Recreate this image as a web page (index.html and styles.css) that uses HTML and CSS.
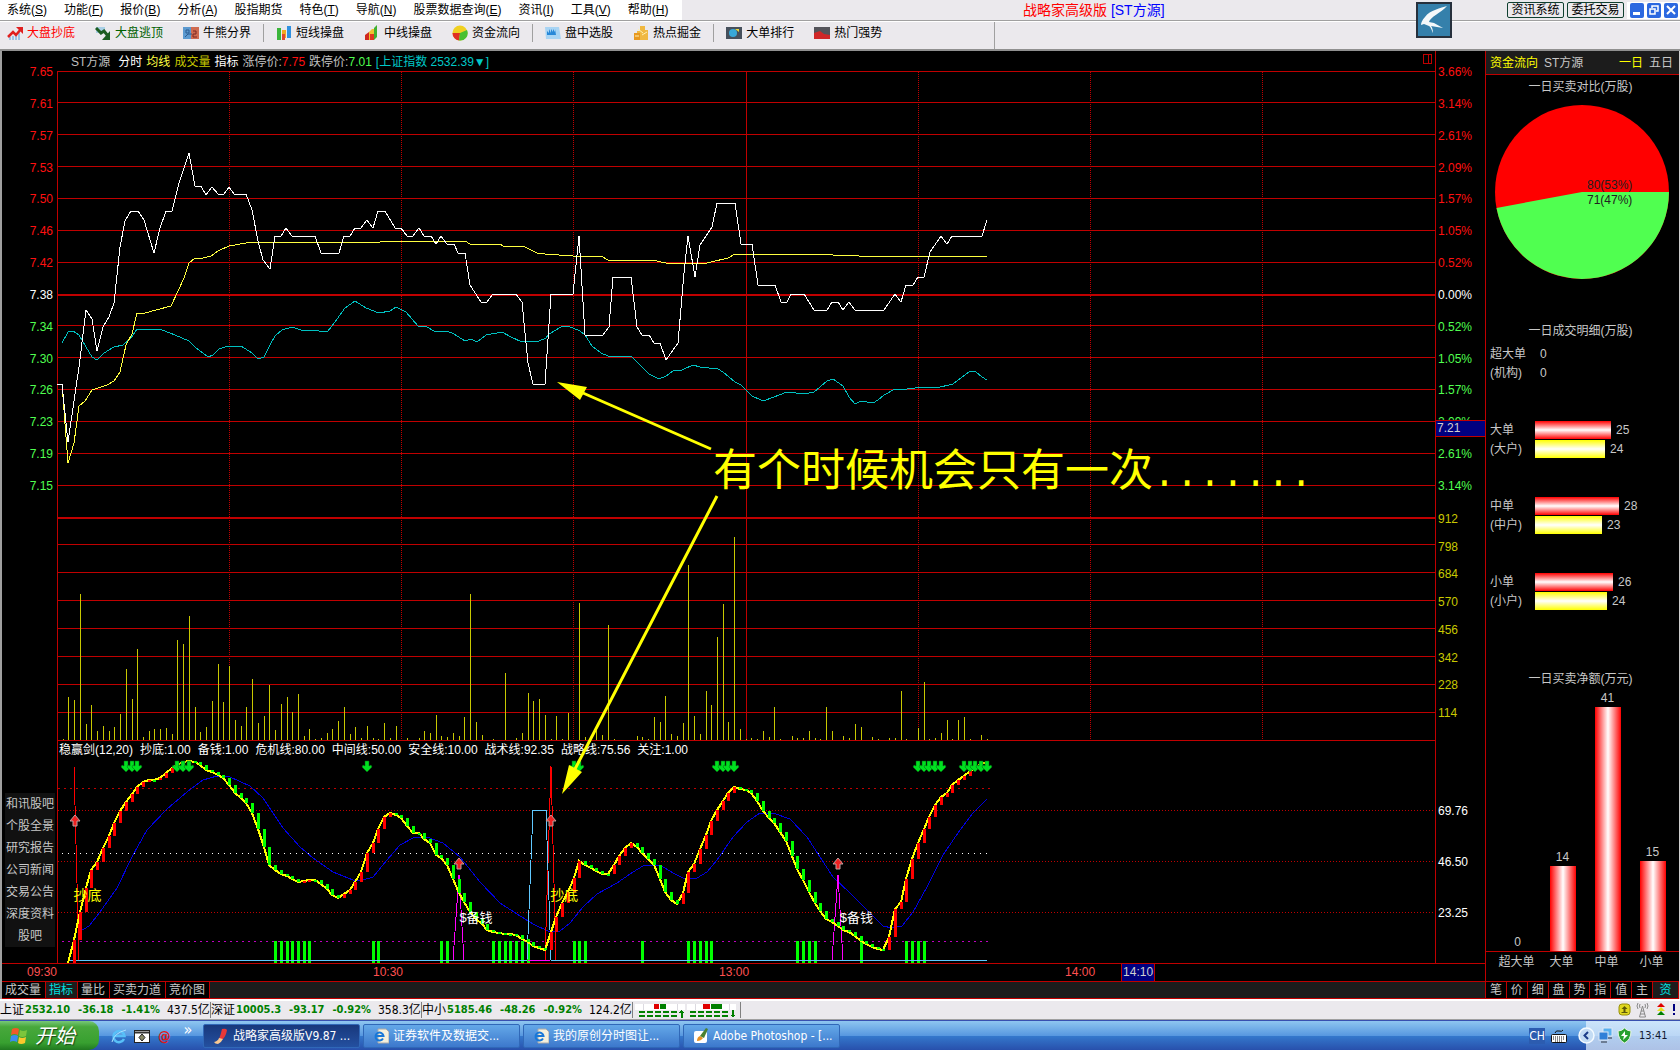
FILE: index.html
```html
<!DOCTYPE html>
<html lang="zh-CN">
<head>
    <meta charset="UTF-8">
    <meta name="viewport" content="width=device-width, initial-scale=1.0">
    <title>战略家高级版[ST方源]</title>
    <link rel="stylesheet" href="styles.css">
    <script src="chart.js" defer></script>
</head>
<body>
    <header class="menubar">
        <nav class="menu">
            <a href="#">系统(<u>S</u>)</a>
            <a href="#">功能(<u>F</u>)</a>
            <a href="#">报价(<u>B</u>)</a>
            <a href="#">分析(<u>A</u>)</a>
            <a href="#">股指期货</a>
            <a href="#">特色(<u>T</u>)</a>
            <a href="#">导航(<u>N</u>)</a>
            <a href="#">股票数据查询(<u>E</u>)</a>
            <a href="#">资讯(<u>I</u>)</a>
            <a href="#">工具(<u>V</u>)</a>
            <a href="#">帮助(<u>H</u>)</a>
        </nav>
        <h1 class="title">战略家高级版 <span>[ST方源]</span></h1>
        <div class="window-tools">
            <button class="link-btn">资讯系统</button>
            <button class="link-btn">委托交易</button>
            <div class="win-buttons">
                <button class="win-btn" aria-label="最小化"><svg viewBox="0 0 14 14"><path d="M3 10.5h7" stroke-width="3"/></svg></button>
                <button class="win-btn" aria-label="还原"><svg viewBox="0 0 14 14"><path d="M5 5V3h6v5H9M3 6h5v5H3z" stroke-width="1.5"/></svg></button>
                <button class="win-btn" aria-label="关闭"><svg viewBox="0 0 14 14"><path d="M3 3l8 8M11 3l-8 8" stroke-width="2"/></svg></button>
            </div>
        </div>
        <svg class="logo" viewBox="0 0 36 36">
            <rect x="1" y="1" width="34" height="34" fill="#3580ab" stroke="#26303c" stroke-width="2"/>
            <path d="M31 4C25 6 14 8 9 15C6 18 5 21 5 23L8 22L13 24C15 25 16 29 17 31C17 28 16 25 15 24L27 26L18 21L13 20C14 15 25 11 31 4Z" fill="#f4f8fa"/>
        </svg>
    </header>
    <div class="toolbar">
        <button class="tool red"><svg viewBox="0 0 16 16"><path d="M3 15v-3M6 15V11M9 15V10M12 15V7" stroke="#9cc4e8" stroke-width="2"/><path d="M1 12l5-5 3 3 5-6" fill="none" stroke="#e02020" stroke-width="2.5"/><path d="M9 2h7v7z" fill="#e02020"/></svg>大盘抄底</button>
        <button class="tool green"><svg viewBox="0 0 16 16"><path d="M1 2h9v6H1z" fill="#a9cfe6"/><path d="M1 3l5 5 3-2 4 5" fill="none" stroke="#1c5c20" stroke-width="3"/><path d="M15 6v9H7z" fill="#1c5c20"/></svg>大盘逃顶</button>
        <button class="tool"><svg viewBox="0 0 16 16"><path d="M0 2h8v12H0z" fill="#5c9ad0"/><path d="M8 2h8v12H8z" fill="#cf6b50"/><path d="M3 5h3v3H3zM2 12l3-3h4" stroke="#2d5c90" fill="none"/><path d="M10 6h3v3h-3v3h4" stroke="#7a2820" fill="none"/></svg>牛熊分界</button>
        <i class="sep"></i>
        <button class="tool"><svg viewBox="0 0 16 16"><path d="M1 3h4v12H1z" fill="#3bb53b"/><path d="M6 5h4v8H6z" fill="#f4a820"/><path d="M6 9h3v6H6z" fill="#e04830"/><path d="M11 1h4v12h-4z" fill="#3090e0"/></svg>短线操盘</button>
        <button class="tool"><svg viewBox="0 0 16 16"><path d="M1 10l4-3v8H1z" fill="#d02820"/><path d="M5 7l3-3h2v11H5z" fill="#f0c030"/><path d="M10 3l3-3v12l-3 3z" fill="#40b030"/><path d="M6 9h4v6H6z" fill="#e03820"/></svg>中线操盘</button>
        <button class="tool"><svg viewBox="0 0 16 16"><circle cx="8" cy="8" r="7.5" fill="#f0d020"/><path d="M8 8H0.5A7.5 7.5 0 0 0 7 15.5z" fill="#e03020"/><path d="M8 8l7-3a7.5 7.5 0 0 1-8 10.5z" fill="#48c030"/></svg>资金流向</button>
        <i class="sep"></i>
        <button class="tool"><svg viewBox="0 0 16 16"><path d="M0 2h14l2 12H1z" fill="#a8d4f4"/><path d="M2 10V6l2 2V4l2 4V4l2 3V4l2 3V4l1 6z" fill="#2888d8"/></svg>盘中选股</button>
        <button class="tool"><svg viewBox="0 0 16 16"><path d="M7 1h5v4h3v10H4V6h3z" fill="#f0b840"/><path d="M1 8h6v7H1z" fill="#e89820"/><path d="M5 4l5 4M9 10l5-3M2 11h4" stroke="#fff0b0"/></svg>热点掘金</button>
        <i class="sep"></i>
        <button class="tool"><svg viewBox="0 0 16 16"><path d="M0 2h16v12H0z" fill="#46505c"/><circle cx="7" cy="8" r="4" fill="#38a8d8"/><path d="M9 4h4v3z" fill="#e8d840"/></svg>大单排行</button>
        <button class="tool"><svg viewBox="0 0 16 16"><path d="M0 2h16v12H0z" fill="#54545a"/><path d="M0 8l6-2 4 3 6 1v4H0z" fill="#d02828"/></svg>热门强势</button>
    </div>

    <main class="workspace">
        <section class="analysis">
            <div class="left-side">
                <div class="scale scale-left">
                    <div class="scale-price">
                        <span class="up">7.65</span><span class="up">7.61</span><span class="up">7.57</span><span class="up">7.53</span><span class="up">7.50</span><span class="up">7.46</span><span class="up">7.42</span><span>7.38</span><span class="down">7.34</span><span class="down">7.30</span><span class="down">7.26</span><span class="down">7.23</span><span class="down">7.19</span><span class="down">7.15</span>
                    </div>
                </div>
                <nav class="side-links">
                    <a href="#">和讯股吧</a>
                    <a href="#">个股全景</a>
                    <a href="#">研究报告</a>
                    <a href="#">公司新闻</a>
                    <a href="#">交易公告</a>
                    <a href="#">深度资料</a>
                    <a href="#">股吧</a>
                </nav>
            </div>
            <div class="plot">
                <svg id="chart" viewBox="57 51 1378 912" preserveAspectRatio="none"></svg>
                <div class="plot-head">
                    <span class="grey stock">ST方源</span><span>分时</span><span class="yellow">均线</span><span class="olive">成交量</span><span>指标</span>
                    <span class="grey">涨停价:<b class="up">7.75</b></span><span class="grey">跌停价:<b class="down">7.01</b></span>
                    <span class="cyan">[上证指数 2532.39▼]</span>
                </div>
                <div class="indicator-head">
                    <span>稳赢剑(12,20)</span><span>抄底:1.00</span><span>备钱:1.00</span><span>危机线:80.00</span><span>中间线:50.00</span><span>安全线:10.00</span><span>战术线:92.35</span><span>战略线:75.56</span><span>关注:1.00</span>
                </div>
                <span class="mark bottom-1">抄底</span>
                <span class="mark bottom-2">抄底</span>
                <span class="mark cash cash-1">$备钱</span>
                <span class="mark cash cash-2">$备钱</span>
                <p class="note">有个时候机会只有一次<span>.......</span></p>
                <svg class="arrows" viewBox="57 51 1378 912" preserveAspectRatio="none">
                    <path d="M711 449L583 393M717 496L575 769" stroke="#ff0" stroke-width="3"/>
                    <path d="M557 382l30 5-7 13zM562 794l7-29 13 7z" fill="#ff0"/>
                </svg>
            </div>
            <div class="scale scale-right">
                <div class="scale-price">
                    <span class="up">3.66%</span><span class="up">3.14%</span><span class="up">2.61%</span><span class="up">2.09%</span><span class="up">1.57%</span><span class="up">1.05%</span><span class="up">0.52%</span><span>0.00%</span><span class="down">0.52%</span><span class="down">1.05%</span><span class="down">1.57%</span><span class="down">2.09%</span><span class="down">2.61%</span><span class="down">3.14%</span>
                </div>
                <div class="scale-volume">
                    <span>912</span><span>798</span><span>684</span><span>570</span><span>456</span><span>342</span><span>228</span><span>114</span>
                </div>
                <div class="scale-indicator">
                    <span>69.76</span><span>46.50</span><span>23.25</span>
                </div>
                <span class="cursor-price">7.21</span>
            </div>
            <div class="time-axis">
                <span class="open">09:30</span>
                <div class="hours"><span>10:30</span><span>13:00</span><span>14:00</span></div>
                <span class="cursor-time">14:10</span>
            </div>
            <nav class="tabs">
                <a href="#">成交量</a><a href="#" class="active">指标</a><a href="#">量比</a><a href="#">买卖力道</a><a href="#">竞价图</a>
            </nav>
        </section>

        <aside class="flow">
            <div class="flow-head">
                <b>资金流向</b><span>ST方源</span>
                <a href="#" class="active">一日</a><a href="#">五日</a>
            </div>
            <h2 class="pie-title">一日买卖对比(万股)</h2>
            <svg class="pie" viewBox="0 0 174 174">
                <circle cx="87" cy="87" r="87" fill="#f00"/>
                <path d="M87 87H174A87 87 0 0 1 1.5 103z" fill="#50ff50"/>
                <text x="92" y="84">80(53%)</text>
                <text x="92" y="99">71(47%)</text>
            </svg>
            <h2 class="detail-title">一日成交明细(万股)</h2>
            <div class="orders">
                <div class="order"><span>超大单</span><em>0</em></div>
                <div class="order"><span>(机构)</span><em>0</em></div>
            </div>
            <div class="orders">
                <div class="order"><span>大单</span><i class="bar buy" style="width:76px"></i><em>25</em></div>
                <div class="order"><span>(大户)</span><i class="bar sell" style="width:70px"></i><em>24</em></div>
            </div>
            <div class="orders">
                <div class="order"><span>中单</span><i class="bar buy" style="width:84px"></i><em>28</em></div>
                <div class="order"><span>(中户)</span><i class="bar sell" style="width:67px"></i><em>23</em></div>
            </div>
            <div class="orders">
                <div class="order"><span>小单</span><i class="bar buy" style="width:78px"></i><em>26</em></div>
                <div class="order"><span>(小户)</span><i class="bar sell" style="width:72px"></i><em>24</em></div>
            </div>
            <h2 class="net-title">一日买卖净额(万元)</h2>
            <div class="net">
                <div><em>0</em></div>
                <div><em>14</em><i style="height:85px"></i></div>
                <div><em>41</em><i style="height:244px"></i></div>
                <div><em>15</em><i style="height:90px"></i></div>
            </div>
            <div class="net-labels"><span>超大单</span><span>大单</span><span>中单</span><span>小单</span></div>
            <nav class="flow-tabs">
                <a href="#">笔</a><a href="#">价</a><a href="#">细</a><a href="#">盘</a><a href="#">势</a><a href="#">指</a><a href="#">值</a><a href="#">主</a><a href="#" class="active">资</a>
            </nav>
        </aside>
    </main>

    <div class="status">
        <div class="index"><span>上证</span><b>2532.10</b><b>-36.18</b><b>-1.41%</b><span>437.5亿</span></div>
        <div class="index"><span>深证</span><b>10005.3</b><b>-93.17</b><b>-0.92%</b><span>358.3亿</span></div>
        <div class="index"><span>中小</span><b>5185.46</b><b>-48.26</b><b>-0.92%</b><span>124.2亿</span></div>
        <svg class="breadth" viewBox="0 0 106 16" shape-rendering="crispEdges">
            <path d="M1 2h50v6H1zM53 2h50v6H53z" fill="#fff"/>
            <path d="M10 2v6M44 2v6M62 2v6M96 2v6" stroke="#dcdae0"/>
            <path d="M20 2h5v5h-5zM70 2h7v5h-7z" fill="#e00000"/>
            <path d="M26 2h6v5h-6zM78 2h11v5H78z" fill="#008000"/>
            <path d="M5 10h39M5 14h39M57 10h39M57 14h39" stroke="#008000" stroke-width="2" stroke-dasharray="6 2"/>
            <path d="M48 8l3 3h-2v5h-2v-5h-2zM100 16l-3-3h2V8h2v5h2z" fill="#008000"/>
        </svg>
        <svg class="status-icons" viewBox="0 0 62 18">
            <rect x="1" y="3" width="11" height="11" rx="3" fill="#e0d820" stroke="#98900c"/>
            <path d="M6.5 5l3 3h-2v3h2v1h-6v-1h2V8h-2z" fill="#5c5808"/>
            <path d="M20 2q-2 3 0 6M22 3q-1 2 0 4M29 2q2 3 0 6M27 3q1 2 0 4M24.5 5l-3 11h6zM23 10h3M22 13h5" fill="none" stroke="#888"/>
            <path d="M39 6l4-4 4 4z" fill="#e00000"/><path d="M39 10l4-4 4 4z" fill="#e8e020"/><path d="M39 14l4-4 4 4z" fill="#008000"/>
            <path d="M56 3v7M56 12v2" stroke="#000080" stroke-width="2"/>
        </svg>
    </div>

    <footer class="taskbar">
        <button class="start">
            <svg viewBox="0 0 20 20"><path d="M3 3q4-2 7 0l-1 6q-4-2-7 0z" fill="#f05a28"/><path d="M11 4q3 2 7 0l-1 6q-4 2-7 0z" fill="#7cc63c"/><path d="M2 10q4-2 7 0l-1 6q-4-2-7 0z" fill="#3c8cf0"/><path d="M10 11q3 2 7 0l-1 6q-4 2-7 0z" fill="#fcc82c"/></svg>
            开始
        </button>
        <div class="quick">
            <svg viewBox="0 0 16 16"><path d="M13 11A5.5 5.5 0 1 1 13.5 8H3" fill="none" stroke="#58c0f8" stroke-width="2.5"/><path d="M1 14Q3 5 15 2" fill="none" stroke="#a8e0ff"/></svg>
            <svg viewBox="0 0 16 16"><rect x="0.5" y="2.5" width="15" height="12" fill="#fff" stroke="#222"/><path d="M1 4.5h14" stroke="#333" stroke-width="2"/><path d="M8 6l3 3.5-3 3.5-3-3.5z" fill="#886" stroke="#222"/></svg>
            <b class="at">@</b>
            <span class="more">»</span>
        </div>
        <button class="task active"><svg viewBox="0 0 16 16"><path d="M9 1q4-1 5 1-1 6-4 9l-4 0q2-5 3-10z" fill="#e83838"/><path d="M6 10l4 1q-2 4-5 5-3 0-4-2 4-1 5-4z" fill="#f8c890"/></svg>战略家高级版V9.87 ...</button>
        <button class="task"><svg viewBox="0 0 16 16"><path d="M5 1h8l3 3v11H5z" fill="#f4f0dc" stroke="#aaa"/><path d="M10 10.5A4 4 0 1 1 10.5 8H3" fill="none" stroke="#1878d8" stroke-width="2"/></svg>证券软件及数据交...</button>
        <button class="task"><svg viewBox="0 0 16 16"><path d="M5 1h8l3 3v11H5z" fill="#f4f0dc" stroke="#aaa"/><path d="M10 10.5A4 4 0 1 1 10.5 8H3" fill="none" stroke="#1878d8" stroke-width="2"/></svg>我的原创分时图让...</button>
        <button class="task"><svg viewBox="0 0 16 16"><rect x="1" y="3" width="13" height="12" rx="2" fill="#fff"/><path d="M4 13q0-4 3-5l3 2q-2 3-6 3z" fill="#e89020"/><path d="M7 8l6-8 2 1-4 9z" fill="#4a8030"/></svg>Adobe Photoshop - [...</button>
        <div class="lang"><span>CH</span>
            <svg viewBox="0 0 16 14"><path d="M4 4q1-3 4-2t4-1" fill="none" stroke="#111"/><rect x="0.5" y="5.5" width="15" height="8" rx="1" fill="#fff" stroke="#111"/><path d="M2 8h12M2 10h12M4 12h8" stroke="#111" stroke-dasharray="1 1"/></svg>
        </div>
        <div class="tray">
            <svg viewBox="0 0 17 17"><circle cx="8.5" cy="8.5" r="7.5" fill="#c4dcf4" stroke="#f4faff" stroke-width="1.5"/><path d="M10 5L6.5 8.5 10 12" fill="none" stroke="#1c3c88" stroke-width="2"/></svg>
            <svg viewBox="0 0 17 17"><rect x="6" y="1" width="9" height="8" fill="#58b0f0" stroke="#dde8f4"/><rect x="2" y="5" width="9" height="8" fill="#3080d8" stroke="#dde8f4"/><path d="M4 15h6M11 11h4" stroke="#6c7c94" stroke-width="2"/></svg>
            <svg viewBox="0 0 17 17"><path d="M2 4q4 0 6.5-3 2.5 3 6.5 3 0 9-6.5 12Q2 13 2 4z" fill="#28a030" stroke="#e8f4e4"/><path d="M9 4L5 9h3l-1 4 5-5H9z" fill="#fff"/></svg>
            <time>13:41</time>
        </div>
    </footer>
</body>
</html>
```
FILE: styles.css
```css
* {
    box-sizing: border-box;
}
body {
    margin: 0;
    height: 100vh;
    display: flex;
    flex-direction: column;
    overflow: hidden;
    background-color: #ebe9ed;
    font-family: "Liberation Sans", "Noto Sans CJK SC", sans-serif;
    font-size: 12px;
    line-height: 14px;
    color: #000;
}
a {
    color: inherit;
    text-decoration: none;
}
button {
    font: inherit;
    color: inherit;
    border: none;
    padding: 0;
    background: none;
    white-space: nowrap;
    cursor: pointer;
}
h1, h2, p {
    margin: 0;
    font-size: 12px;
    font-weight: normal;
}
em, i {
    font-style: normal;
}
.up {
    color: #ff1010;
}
.down {
    color: #50ff50;
}

/* menu */
.menubar {
    position: relative;
    display: flex;
    align-items: center;
    height: 21px;
    border-bottom: 1px solid #a0a0a0;
}
.menu {
    display: flex;
    align-items: center;
    gap: 17px;
    width: 682px;
    height: 20px;
    padding-left: 7px;
    background-color: #fff;
    white-space: nowrap;
}
.title {
    flex: 1;
    padding-left: 341px;
    font-size: 14px;
    white-space: nowrap;
    color: #f00;
}
.title span {
    color: #00f;
}
.window-tools {
    display: flex;
    align-items: center;
    gap: 3px;
}
.link-btn {
    width: 57px;
    height: 16px;
    border: 1px solid #104030;
    border-radius: 2px;
}
.win-buttons {
    display: flex;
    gap: 3px;
    padding: 1px 2px 1px 3px;
    background-color: #fff;
}
.win-btn {
    width: 14px;
    height: 15px;
    border-radius: 2px;
    background-color: #2c68e0;
}
.win-btn svg {
    display: block;
    fill: none;
    stroke: #fff;
}
.logo {
    position: absolute;
    z-index: 1;
    top: 2px;
    right: 228px;
    width: 36px;
    height: 36px;
}

/* toolbar */
.toolbar {
    display: flex;
    align-items: center;
    gap: 20px;
    height: 30px;
    padding: 0 0 6px 7px;
    border-top: 1px solid #fff;
    border-bottom: 2px solid #909090;
    background-image: linear-gradient(#a0a0a0, #a0a0a0);
    background-repeat: no-repeat;
    background-position: 994px 0;
    background-size: 1px 100%;
}
.tool {
    display: flex;
    align-items: center;
    gap: 4px;
}
.tool svg {
    width: 16px;
    height: 16px;
}
.tool.red {
    color: #f00;
}
.tool.green {
    color: #006000;
}
.sep {
    width: 1px;
    height: 18px;
    margin: 0 -8px;
    background-color: #a0a0a0;
}

/* chart area */
.workspace {
    flex: 1;
    min-height: 0;
    display: flex;
    border-left: 2px solid #a0a0a0;
    border-right: 1px solid #d0d0d0;
    background-color: #000;
    color: #fff;
}
.analysis {
    flex: 1;
    display: grid;
    grid-template-columns: 55px 1fr 50px;
    grid-template-rows: 1fr 18px 18px;
    min-width: 0;
}
.left-side {
    position: relative;
}
.scale {
    position: relative;
    display: flex;
    flex-direction: column;
    height: 100%;
    padding: 14px 0 43px;
}
.scale-left {
    padding: 14px 4px 470px 0;
    text-align: right;
}
.scale-right {
    padding-left: 2px;
    border-left: 1px solid #c00000;
}
.scale-price,
.scale-volume,
.scale-indicator {
    display: flex;
    flex-direction: column;
    justify-content: space-between;
    flex: 428 1 0;
}
.scale-volume {
    flex-grow: 208;
    margin-top: 19px;
    color: #c8c800;
}
.scale-indicator {
    flex-grow: 116;
    margin-top: 84px;
}
.cursor-price {
    position: absolute;
    left: 0;
    right: 0;
    top: 369px;
    height: 17px;
    padding-left: 1px;
    border: 1px solid #c00000;
    border-width: 1px 0;
    background-color: #000080;
    color: #d0d0d0;
}
.side-links {
    position: absolute;
    left: 3px;
    right: 2px;
    bottom: 16px;
    background-color: #111;
    color: #c8c8c8;
    text-align: center;
}
.side-links a {
    display: block;
    line-height: 22px;
    white-space: nowrap;
}
.plot {
    position: relative;
    min-width: 0;
}
.plot > svg {
    position: absolute;
    width: 100%;
    height: 100%;
}
.plot-head,
.indicator-head {
    position: absolute;
    display: flex;
    white-space: nowrap;
}
.plot-head {
    top: 4px;
    left: 14px;
    gap: 4px;
}
.plot-head b {
    font-weight: normal;
}
.indicator-head {
    top: 692px;
    left: 2px;
    gap: 7px;
}
.stock {
    margin-right: 4px;
}
.grey {
    color: #c0c0c0;
}
.yellow {
    color: #ffff40;
}
.olive {
    color: #c8c800;
}
.cyan {
    color: #00c8c8;
}
.mark {
    position: absolute;
    font-size: 14px;
    white-space: nowrap;
    color: #ff0;
}
.bottom-1 {
    left: 1.2%;
    top: 91.8%;
}
.bottom-2 {
    left: 35.8%;
    top: 91.8%;
}
.cash {
    top: 94.3%;
    font-size: 13px;
    color: #fff;
}
.cash-1 {
    left: 29.2%;
}
.cash-2 {
    left: 56.8%;
}
.note {
    position: absolute;
    left: 656px;
    top: 396px;
    font-size: 44px;
    line-height: 48px;
    white-space: nowrap;
    color: #ff0;
}
.note span {
    font-family: "Liberation Mono", monospace;
    font-size: 38px;
}
.time-axis {
    grid-column: 1 / 4;
    display: flex;
    border-top: 1px solid #c00000;
    line-height: 16px;
    color: #ff5050;
}
.open {
    width: 55px;
    text-align: right;
}
.hours {
    width: 70%;
    display: flex;
}
.hours span {
    flex: 1;
    text-align: right;
}
.cursor-time {
    width: 34px;
    margin-left: 26px;
    border: 1px solid #c00000;
    border-width: 0 1px;
    background-color: #000080;
    text-align: center;
    color: #d0d0d0;
}
.tabs {
    grid-column: 1 / 4;
    display: flex;
    border-top: 1px solid #c00000;
    border-bottom: 1px solid #c00000;
    background-color: #1c1c1c;
    color: #c8c8c8;
    line-height: 16px;
}
.tabs a {
    padding: 0 4px 0 3px;
    border-right: 1px solid #c00000;
    background-color: #000;
}
.tabs .active,
.flow-tabs .active {
    background-color: #1c1c1c;
    color: #00e0e0;
}

/* money flow panel */
.flow {
    display: flex;
    flex-direction: column;
    width: 194px;
    border-left: 1px solid #c00000;
    color: #c8c8c8;
}
.flow h2 {
    padding-right: 4px;
    line-height: 16px;
    text-align: center;
}
.flow-head {
    display: flex;
    align-items: center;
    gap: 6px;
    height: 24px;
    padding: 0 6px 0 4px;
    border-bottom: 1px solid #c00000;
    background-color: #1c1c1c;
}
.flow-head b {
    font-weight: normal;
    color: #ff0;
}
.flow-head span {
    flex: 1;
}
.flow-head .active {
    color: #ff0;
}
.flow .pie-title {
    margin-top: 4px;
}
.pie {
    width: 174px;
    height: 174px;
    margin: 10px 0 0 9px;
}
.pie text {
    font-size: 12px;
    fill: #202020;
}
.flow .detail-title {
    margin: 44px 0 5px;
}
.orders {
    margin-bottom: 38px;
    padding-left: 4px;
}
.order {
    display: flex;
    align-items: center;
    height: 19px;
}
.order span {
    width: 45px;
}
.order em {
    margin-left: 5px;
}
.bar {
    height: 18px;
}
.buy {
    background: linear-gradient(#f00, #fff, #f00);
}
.sell {
    background: linear-gradient(#ff0, #fff, #ff0);
}
.flow .net-title {
    margin-top: 23px;
}
.net {
    flex: 1;
    display: grid;
    grid-template-columns: repeat(4, 45px);
    align-items: end;
    padding-left: 9px;
    border-bottom: 1px solid #c00000;
}
.net div {
    display: flex;
    flex-direction: column;
    align-items: center;
}
.net em {
    margin-bottom: 2px;
}
.net i {
    width: 26px;
    background: linear-gradient(to right, #f00, #fff, #f00);
}
.net-labels {
    display: grid;
    grid-template-columns: repeat(4, 45px);
    height: 29px;
    padding: 3px 0 0 8px;
    text-align: center;
}
.flow-tabs {
    display: flex;
    height: 18px;
    border-top: 1px solid #c00000;
    border-bottom: 1px solid #c00000;
    line-height: 16px;
    text-align: center;
}
.flow-tabs a {
    flex: 1;
    border-right: 1px solid #c00000;
}
.flow-tabs .active {
    flex: 0 0 26px;
}

/* status line */
.status {
    display: flex;
    align-items: center;
    height: 21px;
    border-top: 2px solid #fff;
    border-bottom: 1px solid #a0a0a0;
}
.index {
    display: flex;
    width: 211px;
    white-space: nowrap;
    border-right: 1px solid #808080;
    font-family: "DejaVu Sans Condensed", "Noto Sans CJK SC", sans-serif;
    font-size: 11px;
    line-height: 16px;
}
.index span {
    font-size: 12px;
}
.index b {
    margin: 0 7px 0 1px;
    color: #008000;
}
.breadth {
    width: 108px;
    height: 16px;
    padding: 0 1px;
    border-right: 1px solid #808080;
}
.status-icons {
    width: 62px;
    height: 18px;
    margin-left: auto;
}

/* taskbar */
.taskbar {
    display: flex;
    align-items: center;
    height: 30px;
    border-top: 1px solid #3850b0;
    background: linear-gradient(#8ec6f0, #5898e0 50%, #3478cc 52%, #2850ac);
    font-family: "DejaVu Sans Condensed", "Noto Sans CJK SC", sans-serif;
    color: #fff;
}
.start {
    display: flex;
    align-items: center;
    gap: 6px;
    width: 99px;
    height: 29px;
    padding-left: 9px;
    border-radius: 0 10px 10px 0;
    background: linear-gradient(#78c878, #48a83c 20%, #38a030 75%, #207820);
    font-size: 20px;
    font-style: italic;
    text-shadow: 1px 1px 1px #184818;
}
.start svg {
    width: 20px;
    height: 20px;
}
.quick {
    display: flex;
    align-items: center;
    gap: 7px;
    width: 104px;
    padding-left: 12px;
}
.quick svg {
    width: 16px;
    height: 16px;
}
.at {
    margin-left: 1px;
    font-size: 14px;
    color: #e01818;
}
.more {
    margin: -12px 0 0 6px;
    font-size: 16px;
}
.task {
    display: flex;
    align-items: center;
    gap: 4px;
    width: 157px;
    height: 24px;
    margin-right: 3px;
    padding-left: 9px;
    border: 1px solid #3068b8;
    border-radius: 2px;
    background: linear-gradient(#64a8e8, #3c78cc);
}
.task.active {
    background: linear-gradient(#18387c, #2450a0);
}
.task svg {
    width: 16px;
    height: 16px;
}
.lang {
    display: flex;
    align-items: center;
    gap: 6px;
    margin-left: auto;
}
.lang span {
    background-color: #2c5cb0;
    line-height: 16px;
}
.lang svg {
    width: 16px;
    height: 14px;
}
.tray {
    display: flex;
    align-items: center;
    gap: 2px;
    width: 102px;
    height: 29px;
    margin-left: 11px;
    background: linear-gradient(to right, transparent 8px, rgba(230, 242, 255, 0.7) 8px);
    color: #101830;
}
.tray svg {
    width: 17px;
    height: 17px;
}
.tray time {
    margin-left: 4px;
    font-size: 11px;
}
```
FILE: chart.js
```js
// one trading minute is 172 / 30 wide, the session opens at x = 57
const STEP = 5.74;
const x = i => Math.floor(57.4 + i * STEP);

const price = '57,384 62,384 68,442 79,367 86,310 92,319 97,351 103,327 109,317 114,303 120,247 125,221 131,211 138,211 144,220 154,253 160,228 166,211 172,211 179,183 189,153 195,186 201,186 206,195 212,187 218,194 224,194 229,187 234,194 246,194 252,210 258,241 263,260 270,269 275,236 281,236 286,228 292,236 315,236 321,253 339,253 344,236 350,236 355,228 361,228 367,220 373,228 378,211 385,211 395,228 401,228 407,236 413,236 419,228 424,236 431,236 436,244 441,236 447,244 454,244 458,253 465,253 470,285 481,302 487,302 493,294 516,294 522,302 528,363 533,384 545,384 551,294 573,294 579,236 585,335 603,335 609,327 613,277 631,277 637,327 642,335 649,335 654,343 660,343 666,360 678,343 684,273 688,236 695,277 700,245 712,227 717,203 735,203 741,244 752,244 758,285 775,285 781,302 787,302 791,294 804,294 814,310 827,310 832,302 838,302 843,310 849,302 855,310 884,310 895,294 901,302 906,285 913,285 918,277 924,277 930,252 941,236 947,244 952,236 982,236 987,220';
const average = '57,384 62,384 68,463 74,443 79,406 85,401 92,390 107,385 114,381 120,372 126,345 132,334 137,313 145,313 171,306 179,289 184,278 189,263 195,258 203,258 211,256 218,251 229,246 252,242 380,242 382,241 465,241 470,244 500,244 503,246 523,246 537,253 545,254 573,256 601,256 608,260 652,260 666,263 707,263 728,258 735,254 807,254 859,256 918,256 987,257';
const market = '62,343 68,332 73,331 79,335 86,347 92,357 97,360 104,353 114,347 123,345 131,338 137,329 149,329 162,330 175,335 189,341 195,347 208,357 213,355 219,349 225,347 241,346 252,353 258,359 264,357 270,345 275,336 282,330 292,327 304,331 311,330 327,332 332,326 345,308 355,301 366,308 379,313 390,311 396,307 406,312 418,326 425,326 436,332 447,331 454,334 465,341 471,339 477,342 486,335 502,332 511,337 522,342 539,341 546,338 549,334 561,327 568,326 580,331 585,335 592,346 601,353 608,356 631,356 640,365 649,374 659,379 666,376 673,371 682,370 693,365 700,367 718,369 723,372 735,382 741,385 752,396 763,401 774,397 787,392 804,394 814,392 827,381 833,379 843,386 849,397 855,404 861,401 873,403 878,400 884,395 895,389 907,389 924,387 936,388 953,384 970,371 976,372 982,377 987,380';
const strategy = '79,931 84,929 89,926 100,912 117,888 133,855 147,830 167,809 187,792 203,780 217,776 230,777 250,786 263,798 273,813 283,828 300,847 313,858 333,872 353,880 363,880 373,877 387,860 400,845 413,838 427,837 443,843 460,857 480,882 500,903 517,914 533,924 550,932 560,931 570,923 583,907 597,894 617,883 633,872 643,866 660,865 673,873 685,879 697,878 707,872 717,860 733,837 747,822 760,813 773,813 790,819 807,837 833,877 850,893 867,910 883,926 892,928 902,926 913,912 927,887 943,855 960,830 973,813 987,799';

// volume per minute, from 09:31
const volume = [
    1, 43, 40, 146, 16, 35, 9, 14, 9, 13, 26, 71, 41, 91, 3, 9, 11, 11, 12, 6,
    100, 96, 124, 33, 8, 13, 39, 76, 38, 74, 20, 14, 33, 61, 17, 24, 55, 10, 36, 43,
    28, 46, 4, 11, 1, 2, 7, 11, 19, 33, 6, 13, 2, 14, 2, 1, 17, 2, 14, 0,
    2, 0, 2, 9, 7, 25, 4, 3, 7, 4, 23, 146, 18, 5, 0, 1, 0, 67, 0, 2,
    7, 47, 39, 41, 25, 1, 24, 1, 27, 0, 137, 3, 0, 10, 5, 115, 1, 0, 0, 0,
    4, 3, 1, 23, 18, 44, 6, 4, 17, 175, 24, 6, 49, 35, 103, 136, 18, 203, 11, 1,
    2, 1, 9, 3, 33, 1, 0, 4, 2, 2, 9, 2, 1, 33, 9, 0, 4, 2, 16, 13,
    0, 3, 1, 0, 2, 2, 49, 1, 0, 12, 58, 1, 2, 7, 20, 1, 20, 23, 1, 0, 5, 1
];

// tactics line per minute, from 09:32
const tactics = [
    963, 940, 912, 888, 870, 862, 848, 836, 823, 811, 802, 794, 787, 782, 780, 780, 778, 773, 768, 765,
    762, 761, 762, 765, 770, 772, 775, 778, 785, 793, 798, 803, 813, 829, 847, 865, 870, 874, 876, 879,
    882, 881, 880, 880, 884, 889, 895, 898, 894, 890, 882, 872, 853, 843, 829, 817, 813, 815, 818, 826,
    833, 833, 839, 843, 855, 858, 865, 879, 893, 902, 912, 919, 924, 930, 932, 933, 934, 934, 935, 939,
    942, 946, 948, 950, 932, 917, 903, 892, 878, 861, 865, 868, 871, 874, 874, 865, 856, 848, 843, 847,
    853, 859, 865, 879, 892, 900, 904, 893, 872, 864, 849, 835, 821, 810, 801, 793, 787, 789, 790, 793,
    801, 811, 818, 823, 832, 841, 856, 869, 880, 892, 903, 911, 919, 922, 926, 930, 932, 936, 941, 944,
    947, 949, 950, 937, 909, 902, 879, 859, 843, 829, 817, 805, 797, 793, 785, 780, 776, 771, 768, 764, 762
];
const sticks = [38, 39, 40, 41, 42, 43, 44, 55, 56, 67, 68, 76, 77, 78, 79, 80, 81, 82, 90, 91, 92, 102, 110, 111, 112, 113, 114, 129, 130, 131, 132, 140, 148, 149, 150, 151];
const sells = [12, 13, 14, 21, 22, 23, 54, 90, 91, 115, 116, 117, 118, 150, 151, 152, 153, 154, 158, 159, 160, 161, 162];
const buys = [[75, 815], [459, 858], [551, 815], [838, 858]];

const line = (x1, y1, x2, y2, color, extra = '') =>
    `<path d="M${x1} ${y1}L${x2} ${y2}" stroke="${color}" ${extra}/>`;
const poly = (points, color, width = 1) =>
    `<polyline points="${points}" fill="none" stroke="${color}" stroke-width="${width}"/>`;
const rect = (left, top, width, height, color) =>
    `<rect x="${left}" y="${top}" width="${width}" height="${height}" fill="${color}"/>`;

const RED = '#c00000';
let out = '<g shape-rendering="crispEdges">';

// grid
[71, 102, 134, 166, 198, 230, 262, 325, 357, 389, 421, 453, 485, 544, 572, 600, 628, 656, 684, 712, 740]
    .forEach(y => { out += rect(57, y, 1378, 1, RED); });
out += rect(57, 294, 1378, 2, RED) + rect(57, 517, 1378, 2, RED);
out += rect(57, 71, 1, 892, RED) + rect(746, 71, 1, 669, RED);
[229, 401, 573, 918, 1090, 1262].forEach(gx => {
    out += line(gx + 0.5, 72, gx + 0.5, 740, RED, 'stroke-dasharray="1 1"');
});
[810, 861, 912].forEach(y => {
    out += line(58, y + 0.5, 1435, y + 0.5, RED, 'stroke-dasharray="1 2"');
});
out += line(58, 788.5, 990, 788.5, RED, 'stroke-dasharray="2 4"');
out += line(62, 853.5, 990, 853.5, '#fff', 'stroke-dasharray="1 5"');
out += line(62, 941.5, 990, 941.5, '#c000c0', 'stroke-dasharray="2 4"');
out += '<path d="M1423.5 54.5h8v9h-8zM1428.5 54v9" fill="none" stroke="#c00000"/>';

// volume
volume.forEach((h, n) => {
    if (h) out += rect(x(n + 1), 740 - h, 1, h, '#c8c800');
});

// price
out += poly(market, '#00c0c0') + poly(average, '#ffff40') + poly(price, '#fff');

// indicator
sticks.forEach(i => { out += rect(x(i) - 1, 941, 3, 22, '#00ff00'); });
out += poly(strategy, '#0000e0');
out += poly('74,766 79,960', '#f00') + poly('545,960 551,766 556,960', '#f00');
out += poly('453,960 459,875 464,960', '#ff00ff') + poly('832,960 838,875 843,960', '#ff00ff');
out += poly('70,960 527,960 533,810 546,810 551,960 987,960', '#60c8ff');
out += line(528, 960, 550, 960, '#ff00ff');
out += poly(tactics.map((y, n) => `${x(n + 2)},${y}`).join(' '), '#ff0', 2);
tactics.forEach((y, n) => {
    if (!n || n > 157) return;
    const last = tactics[n - 1];
    out += rect(x(n + 2) - 1, Math.min(y, last), 3, Math.max(Math.abs(y - last), 2), y < last ? '#f00' : '#00ff00');
});
out += '</g>';

// signals
sells.forEach(i => {
    out += `<path d="M${x(i)} 772l-5-5 1-2 2 1v-5h4v5l2-1 1 2z" fill="#00e020" stroke="#006010" stroke-width="0.5"/>`;
});
buys.forEach(([bx, by]) => {
    out += `<path d="M${bx} ${by}l5 6h-3v5h-4v-5h-3z" fill="#f02020" stroke="#c0a0a0"/>`;
});

document.getElementById('chart').innerHTML = out;
```
